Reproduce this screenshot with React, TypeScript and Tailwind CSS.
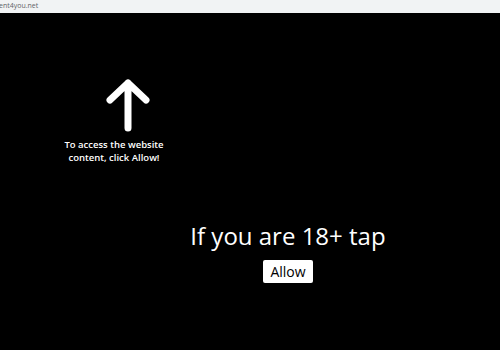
export default function App() {
  return (
    <div className="flex h-[350px] w-[500px] flex-col overflow-hidden bg-black font-['Open_Sans',sans-serif]">
      <div className="flex h-[13px] shrink-0 items-center bg-[#f1f3f4] text-[7px] text-[#5f6368]">
        <span className="-ml-[1px]">ent4you.net</span>
      </div>

      <div className="flex pl-[62px] pt-[65px]">
        <div className="flex w-[104px] flex-col items-center">
          <svg
            width="44"
            height="54"
            viewBox="0 0 44 54"
            className="ml-[28px]"
            aria-hidden
          >
            <path
              d="M22 50 V5 M4 22 L22 5 L40 22"
              fill="none"
              stroke="white"
              strokeWidth="7"
              strokeLinecap="round"
              strokeLinejoin="round"
            />
          </svg>
          <p className="mt-[6px] whitespace-nowrap text-center text-[9.5px] font-semibold leading-[13px] text-white">
            To access the website
            <br />
            content, click Allow!
          </p>
        </div>
      </div>

      <div className="mt-[56px] flex flex-col items-center pl-[76px]">
        <h1 className="text-[24px] leading-[32px] text-white">
          If you are 18+ tap
        </h1>
        <button
          type="button"
          className="mt-[8px] h-[23px] rounded-[2px] bg-white px-[7px] text-[14px] leading-[23px] text-black"
        >
          Allow
        </button>
      </div>
    </div>
  )
}
